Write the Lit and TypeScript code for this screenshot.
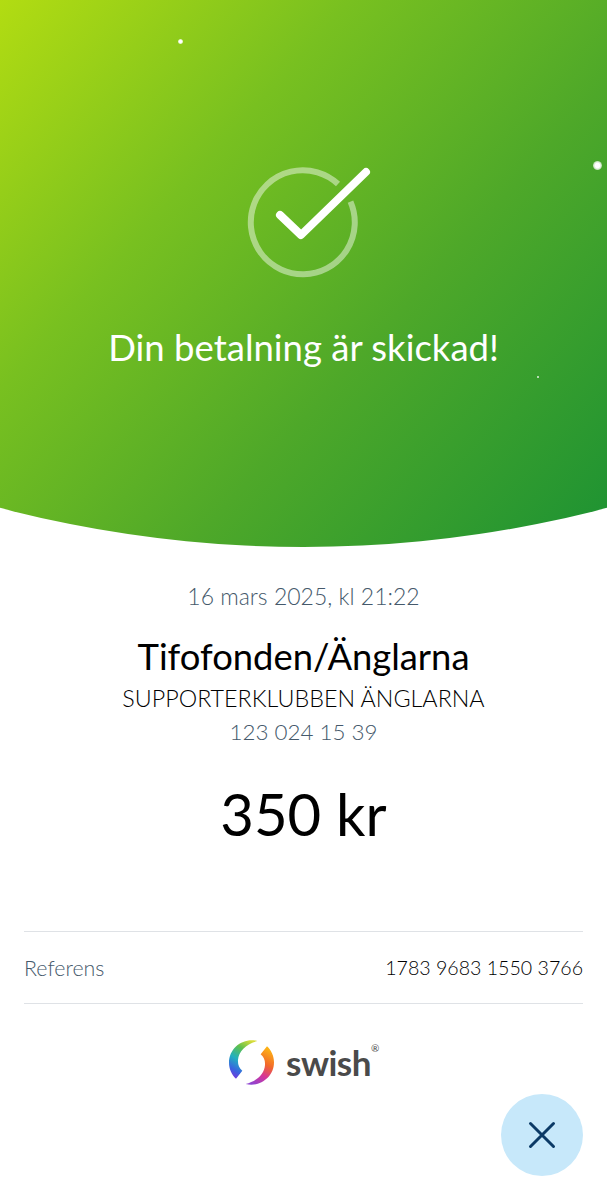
import { LitElement, css, html, svg } from "lit";
import { customElement } from "lit/decorators.js";

// place of the sparkles on the green header
const sparkles = [
  { x: 180, y: 41, size: 5 },
  { x: 597, y: 165, size: 9 },
  { x: 538, y: 377, size: 2 },
];

const swishLogo = svg`
  <defs>
    <linearGradient id="swirl-left" x1="0.75" y1="0" x2="0.3" y2="1">
      <stop offset="0" stop-color="#d8dc3a" />
      <stop offset="0.28" stop-color="#5fc04c" />
      <stop offset="0.58" stop-color="#22b0c0" />
      <stop offset="0.85" stop-color="#3a63e0" />
      <stop offset="1" stop-color="#6a3fdc" />
    </linearGradient>
    <linearGradient id="swirl-right" x1="0.7" y1="0" x2="0.3" y2="1">
      <stop offset="0" stop-color="#fdb515" />
      <stop offset="0.4" stop-color="#f2682a" />
      <stop offset="0.7" stop-color="#d5349a" />
      <stop offset="1" stop-color="#8f44d0" />
    </linearGradient>
  </defs>
  <path
    fill="url(#swirl-left)"
    d="M85 3C45 -8 0 22 0 68C0 86 8 104 21 116L40 92C30 84 26 72 27 60C29 32 52 12 85 3Z"
  />
  <path
    fill="url(#swirl-right)"
    d="M50 132C90 143 135 113 135 67C135 49 127 31 114 19L95 43C105 51 109 63 108 75C106 103 83 123 50 132Z"
  />
`;

@customElement("app-root")
export class AppRoot extends LitElement {
  public static styles = css`
    :host {
      display: block;
      position: relative;
      height: 1200px;
      overflow: hidden;
      background: #fff;
      font-family: Lato, "Open Sans", sans-serif;
    }

    .hero {
      position: relative;
      height: 547px;
      box-sizing: border-box;
      padding-top: 165px;
      display: flex;
      flex-direction: column;
      align-items: center;
      background: linear-gradient(132deg, #b2dc12 0%, #78c020 32%, #4ea829 62%, #1c9233 100%);
      clip-path: circle(1196.5px at 303.5px -649.5px);
    }

    .sparkle {
      position: absolute;
      border-radius: 50%;
      background: radial-gradient(circle, #fff 35%, rgba(255, 255, 255, 0.75) 60%, rgba(255, 255, 255, 0) 100%);
    }

    .check {
      display: block;
      width: 124px;
      height: 114px;
      margin-left: 11px;
    }

    .hero-title {
      margin: 46px 0 0;
      color: #fff;
      font-size: 36.5px;
      font-weight: 400;
      line-height: 44px;
    }

    .details {
      display: flex;
      flex-direction: column;
      align-items: center;
      padding-top: 35px;
    }

    .date {
      color: #45596b;
      font-size: 23px;
      font-weight: 300;
      line-height: 28px;
    }

    .name {
      margin-top: 24px;
      color: #000;
      font-size: 36.4px;
      font-weight: 400;
      line-height: 44px;
    }

    .org {
      margin-top: 5px;
      color: #000;
      font-size: 23.3px;
      font-weight: 300;
      line-height: 30px;
    }

    .number {
      margin-top: 5px;
      color: #45596b;
      font-size: 22.4px;
      font-weight: 300;
      line-height: 28px;
    }

    .amount {
      margin-top: 32px;
      color: #000;
      font-size: 58px;
      font-weight: 400;
      line-height: 72px;
    }

    .reference {
      display: flex;
      justify-content: space-between;
      align-items: center;
      height: 71px;
      margin: 81px 24px 0;
      border-top: 1px solid #dfe2e6;
      border-bottom: 1px solid #dfe2e6;
    }

    .reference-label {
      color: #45596b;
      font-size: 21.4px;
      font-weight: 300;
    }

    .reference-value {
      color: #000;
      font-size: 19.6px;
      font-weight: 300;
    }

    .brand {
      display: flex;
      justify-content: center;
      align-items: center;
      gap: 12px;
      margin-top: 36px;
      margin-right: 7px;
    }

    .brand svg {
      display: block;
      width: 45px;
      height: 45px;
    }

    .brand-name {
      position: relative;
      color: #4a4a4a;
      font-size: 35px;
      font-weight: 700;
      line-height: 45px;
      letter-spacing: -0.5px;
    }

    .brand-name sup {
      position: absolute;
      top: 3px;
      left: 100%;
      font-size: 10px;
      font-weight: 400;
      line-height: 10px;
    }

    .close {
      position: absolute;
      left: 501px;
      top: 1094px;
      width: 82px;
      height: 82px;
      padding: 0;
      border: 0;
      border-radius: 50%;
      background: #c7e8fa;
      display: flex;
      align-items: center;
      justify-content: center;
    }

    .close svg {
      display: block;
      width: 28px;
      height: 28px;
    }
  `;

  public render() {
    return html`
      <section class="hero">
        ${sparkles.map(
          (s) => html`<span
            class="sparkle"
            style="left:${s.x - s.size / 2}px;top:${s.y - s.size / 2}px;width:${s.size}px;height:${s.size}px"
          ></span>`
        )}
        <svg class="check" viewBox="0 0 124 114" fill="none" stroke="#fff">
          <path
            d="M103.5 36.6A52 52 0 1 1 91 19"
            stroke-opacity="0.45"
            stroke-width="6"
          />
          <path
            d="M33 50L54 70L119 7"
            stroke-width="8"
            stroke-linecap="round"
            stroke-linejoin="round"
          />
        </svg>
        <h1 class="hero-title">Din betalning är skickad!</h1>
      </section>

      <section class="details">
        <div class="date">16 mars 2025, kl 21:22</div>
        <div class="name">Tifofonden/Änglarna</div>
        <div class="org">SUPPORTERKLUBBEN ÄNGLARNA</div>
        <div class="number">123 024 15 39</div>
        <div class="amount">350 kr</div>
      </section>

      <div class="reference">
        <span class="reference-label">Referens</span>
        <span class="reference-value">1783 9683 1550 3766</span>
      </div>

      <div class="brand">
        <svg viewBox="0 0 135 135">${swishLogo}</svg>
        <span class="brand-name">swish<sup>®</sup></span>
      </div>

      <button class="close" aria-label="Stäng">
        <svg viewBox="0 0 28 28" fill="none" stroke="#0b3a66" stroke-width="3" stroke-linecap="round">
          <path d="M2.5 2.5L25.5 25.5M25.5 2.5L2.5 25.5" />
        </svg>
      </button>
    `;
  }
}
